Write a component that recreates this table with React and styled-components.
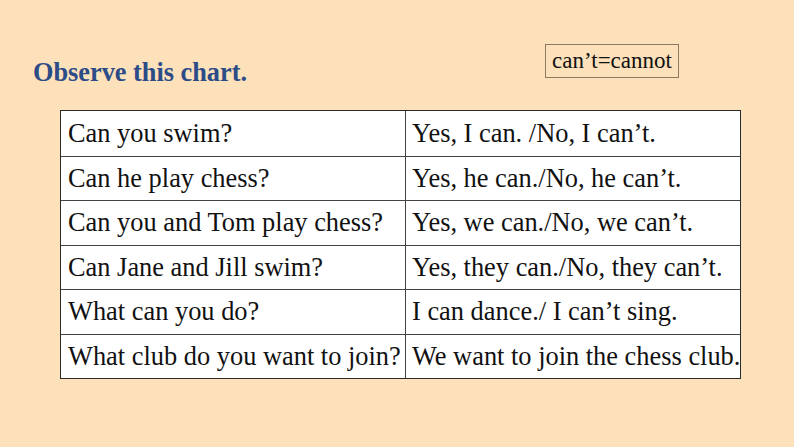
import React from 'react';
import styled, { createGlobalStyle } from 'styled-components';

const GlobalStyle = createGlobalStyle`
  html, body {
    margin: 0;
    padding: 0;
    background: #fde1ba;
    font-family: "Liberation Serif", serif;
  }
`;

const serif = '"Liberation Serif", "Times New Roman", serif';

const Page = styled.div`
  width: 794px;
  height: 447px;
  box-sizing: border-box;
  padding: 44px 115px 0 33px;
  background: #fde1ba;
  font-family: ${serif};
  overflow: hidden;
`;

const Header = styled.div`
  display: flex;
  align-items: flex-start;
  justify-content: space-between;
  height: 34px;
`;

const Title = styled.h1`
  margin: 14px 0 0;
  font-family: ${serif};
  font-size: 26.3px;
  line-height: 30px;
  font-weight: bold;
  color: #2c4c88;
  white-space: nowrap;
`;

const Note = styled.div`
  box-sizing: border-box;
  height: 34px;
  width: 134px;
  border: 1px solid #8c7b62;
  display: flex;
  align-items: center;
  justify-content: center;
  font-family: ${serif};
  font-size: 23px;
  color: #111;
`;

const Chart = styled.div`
  margin: 32px 0 0 27px;
  width: 681px;
  display: grid;
  grid-template-columns: 344px 335px;
  grid-auto-rows: 44.5px;
  background: #fff;
  border: 1px solid #2a2a2a;
  box-sizing: border-box;
`;

const Cell = styled.div`
  display: flex;
  align-items: center;
  padding-left: ${p => (p.$left ? '7px' : '6px')};
  font-family: ${serif};
  font-size: 26.4px;
  color: #111;
  white-space: nowrap;
  border-top: ${p => (p.$first ? 'none' : '1px solid #444')};
  border-left: ${p => (p.$left ? 'none' : '1px solid #444')};
`;

const rows = [
  ['Can you swim?', 'Yes, I can. /No, I can\u2019t.'],
  ['Can he play chess?', 'Yes, he can./No, he can\u2019t.'],
  ['Can you and Tom play chess?', 'Yes, we can./No, we can\u2019t.'],
  ['Can Jane and Jill swim?', 'Yes, they can./No, they can\u2019t.'],
  ['What can you do?', 'I can dance./ I can\u2019t sing.'],
  ['What club do you want to join?', 'We want to join the chess club.'],
];

export default function App() {
  return (
    <Page>
      <GlobalStyle />
      <Header>
        <Title>Observe this chart.</Title>
        <Note>can’t=cannot</Note>
      </Header>
      <Chart>
        {rows.map(([q, a], i) => (
          <React.Fragment key={i}>
            <Cell $left $first={i === 0}>{q}</Cell>
            <Cell $first={i === 0}>{a}</Cell>
          </React.Fragment>
        ))}
      </Chart>
    </Page>
  );
}
